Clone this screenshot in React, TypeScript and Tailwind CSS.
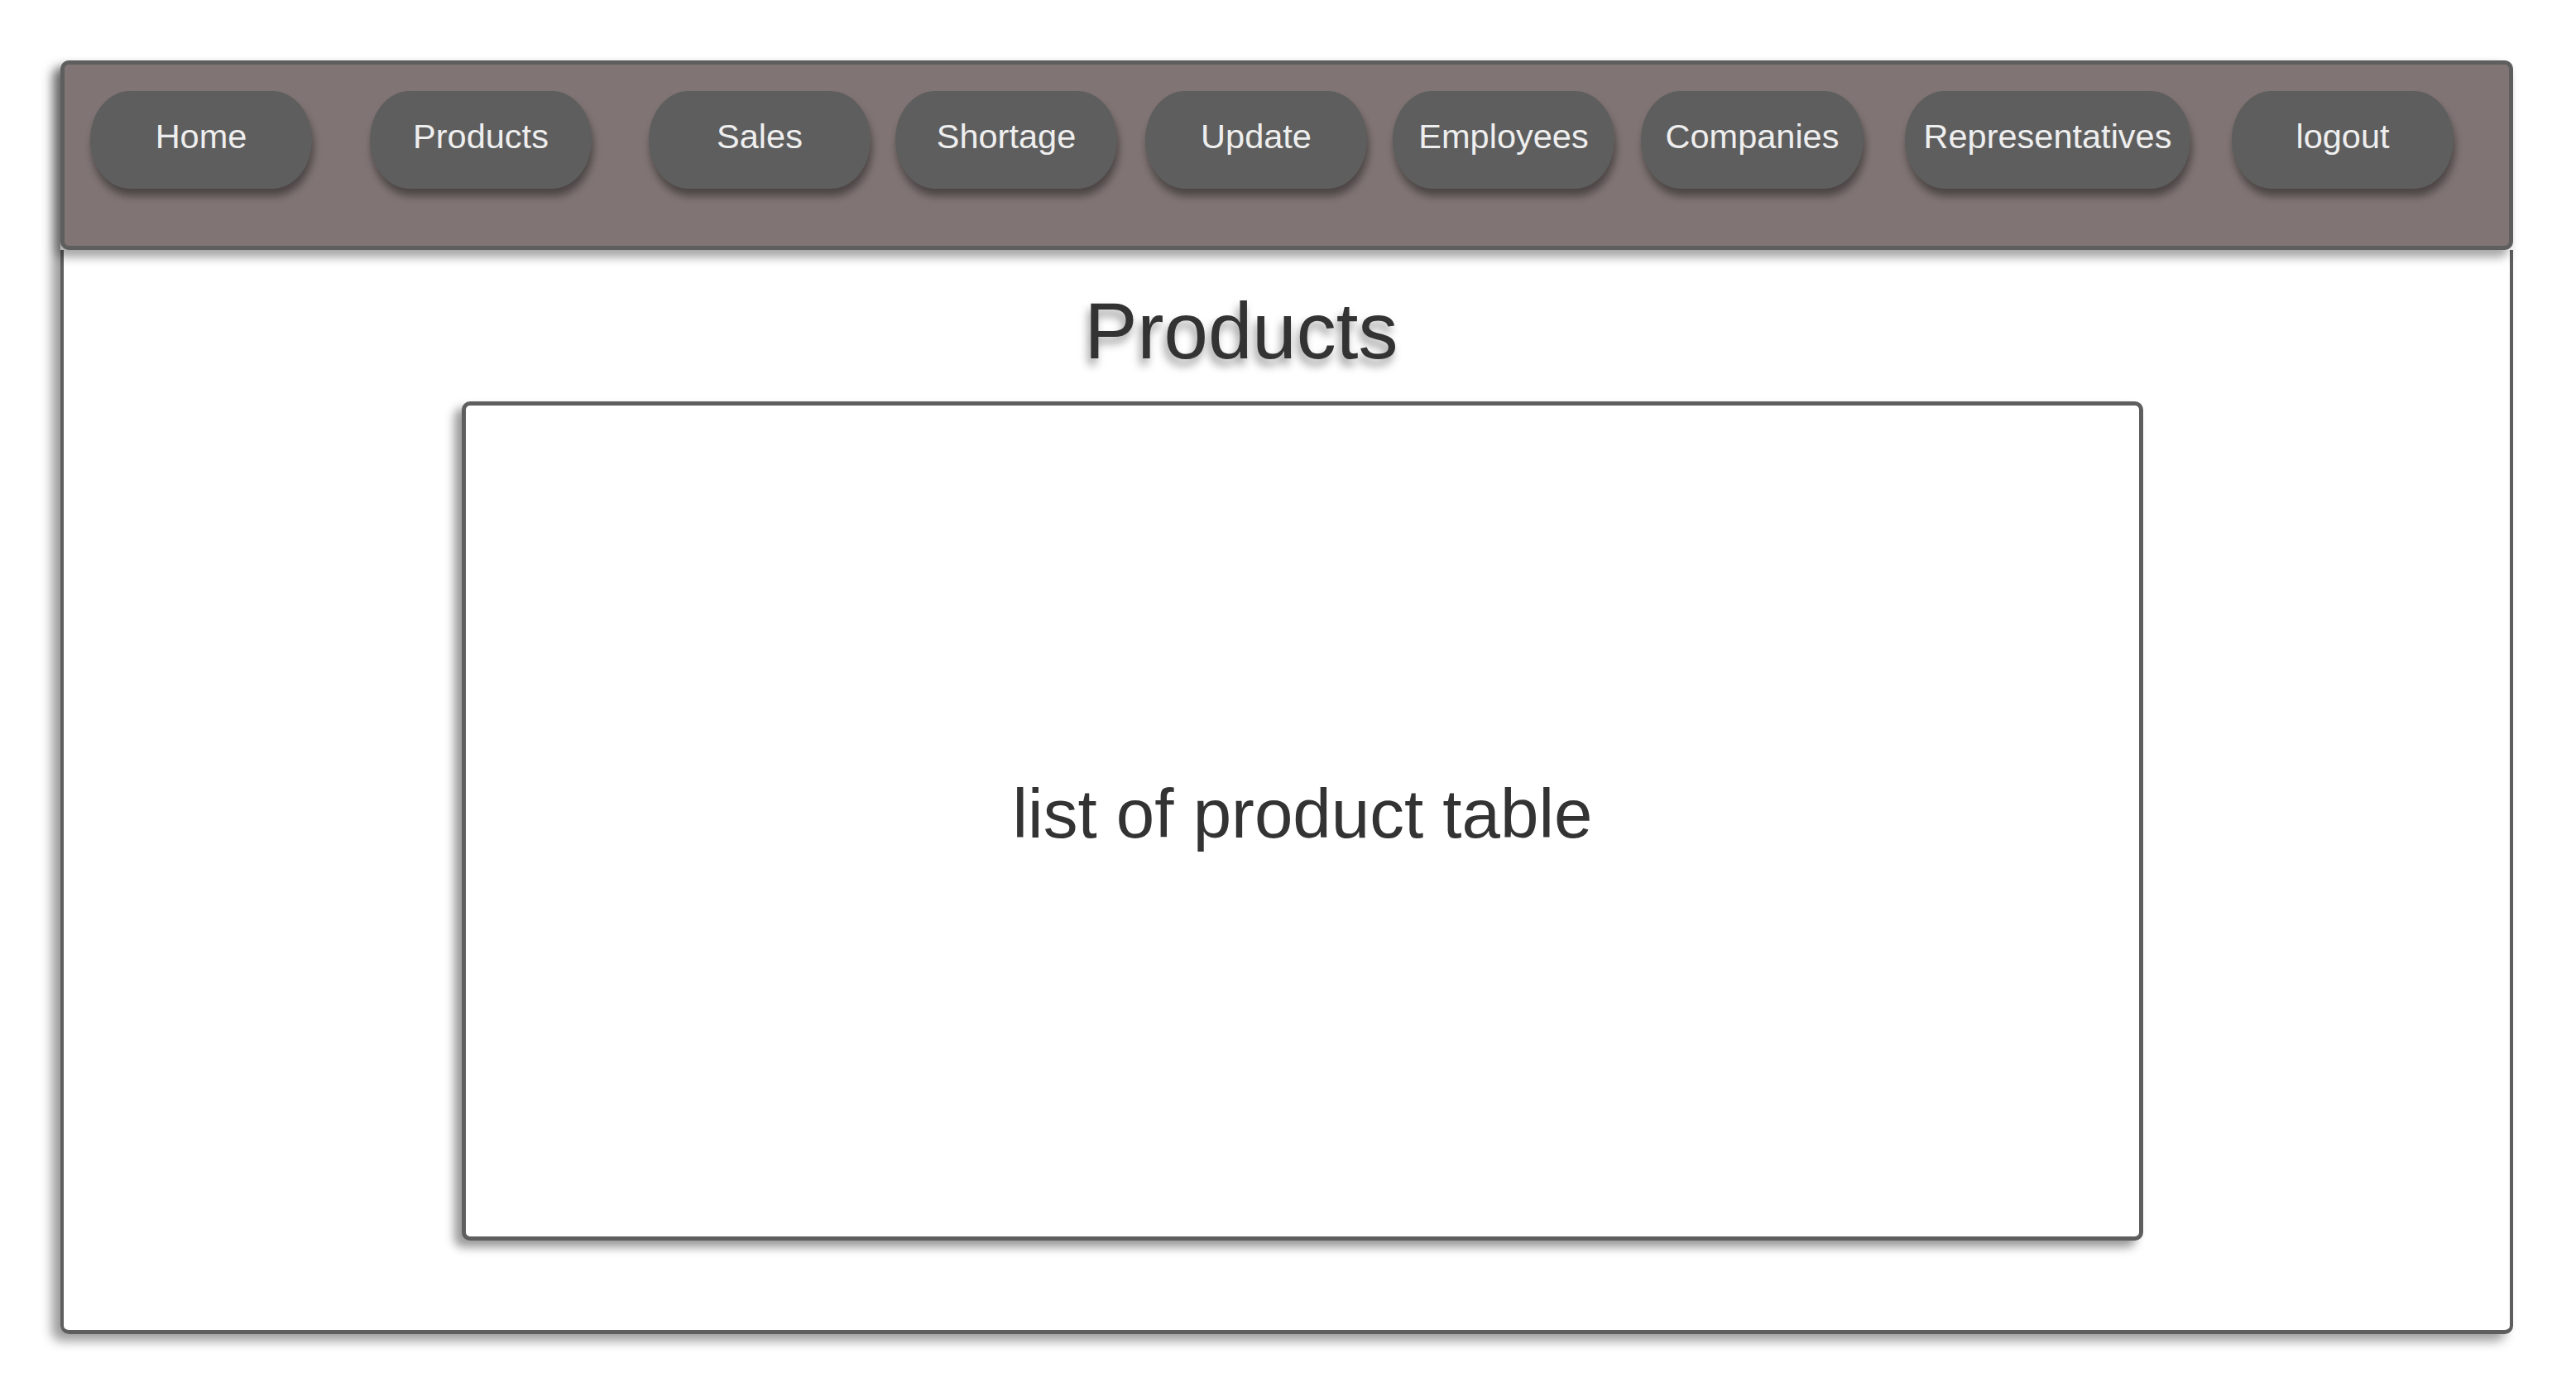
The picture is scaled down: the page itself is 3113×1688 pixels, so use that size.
const navItems = [
  { label: "Home", ml: "ml-[31px]", w: "w-[268px]" },
  { label: "Products", ml: "ml-[70px]", w: "w-[268px]" },
  { label: "Sales", ml: "ml-[69px]", w: "w-[268px]" },
  { label: "Shortage", ml: "ml-[30px]", w: "w-[268px]" },
  { label: "Update", ml: "ml-[34px]", w: "w-[268px]" },
  { label: "Employees", ml: "ml-[31px]", w: "w-[268px]" },
  { label: "Companies", ml: "ml-[32px]", w: "w-[269px]" },
  { label: "Representatives", ml: "ml-[50px]", w: "w-[345px]" },
  { label: "logout", ml: "ml-[50px]", w: "w-[268px]" },
]

export default function App() {
  return (
    <div className="min-h-screen bg-white pl-[73px] pt-[73px] font-['Liberation_Sans',Arial,sans-serif]">
      <div className="flex h-[1539px] w-[2964px] flex-col rounded-[10px] shadow-[-10px_8px_14px_rgba(0,0,0,0.4)]">
        {/* top bar */}
        <nav className="relative z-10 flex h-[229px] shrink-0 items-start rounded-[10px] border-[5px] border-[#5e5e5e] bg-[#807474] pt-[32px] shadow-[-6px_9px_12px_rgba(0,0,0,0.35)]">
          {navItems.map((item) => (
            <button
              key={item.label}
              type="button"
              className={`${item.ml} ${item.w} flex h-[118px] shrink-0 items-center justify-center rounded-[48px_/_50%] bg-[#5e5e5e] pb-[8px] text-[41.5px] text-[#eeeeee] shadow-[2px_9px_10px_rgba(0,0,0,0.4)]`}
            >
              {item.label}
            </button>
          ))}
        </nav>

        <main className="flex flex-1 flex-col rounded-b-[10px] border-x-[4px] border-b-[5px] border-[#5e5e5e] bg-white">
          <div className="flex justify-center pr-[110px] pt-[45px]">
            <h1 className="text-[96px] leading-[105px] text-[#333333] [text-shadow:-3px_8px_11px_rgba(0,0,0,0.4)]">
              Products
            </h1>
          </div>

          <div className="mt-[33px] flex justify-center pl-[38px]">
            <div className="flex h-[1014px] w-[2032px] items-center justify-center rounded-[10px] border-[5px] border-[#5e5e5e] bg-white pb-[16px] shadow-[-9px_8px_12px_rgba(0,0,0,0.4)]">
              <span className="text-[83.5px] text-[#333333]">list of product table</span>
            </div>
          </div>
        </main>
      </div>
    </div>
  )
}
